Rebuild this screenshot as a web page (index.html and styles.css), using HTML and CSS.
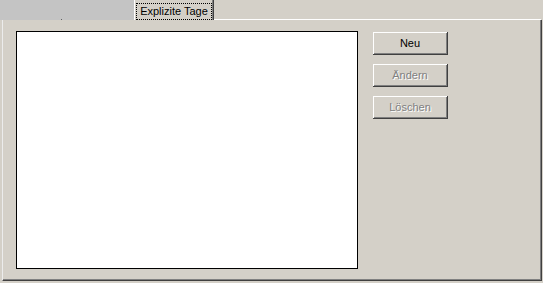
FILE: index.html
```html
<!doctype html>
<html>
<head>
<meta charset="utf-8">
<title>Explizite Tage</title>
<link rel="stylesheet" href="styles.css">
</head>
<body>
    <div class="window">
        <div class="tab-strip">
            <div class="tab-hidden"><span class="dot"></span></div>
            <div class="tab active"><span class="focus">Explizite Tage</span></div>
            <div class="tab-rest"></div>
        </div>
        <div class="panel">
            <div class="listbox"></div>
            <div class="buttons">
                <button class="btn">Neu</button>
                <button class="btn" disabled>Ändern</button>
                <button class="btn" disabled>Löschen</button>
            </div>
        </div>
    </div>
</body>
</html>
```

FILE: styles.css
```css
*{
    padding: 0px;
    margin: 0px;
    box-sizing: border-box;
}
body{
    background-color: #d4d0c8;
    font-family: "Liberation Sans", Arial, sans-serif;
    font-size: 11px;
    color: black;
}
.window{
    width: 543px;
    height: 283px;
}
.tab-strip{
    display: flex;
    height: 20px;
}
.tab-hidden{
    width: 134px;
    height: 20px;
    background-color: #c4c4c4;
    position: relative;
}
.dot{
    position: absolute;
    left: 61px;
    bottom: 0px;
    width: 1px;
    height: 1px;
    background-color: #606060;
}
.tab{
    width: 80px;
    height: 20px;
    border-left: 1px solid white;
    border-right: 1px solid #404040;
    box-shadow: inset -1px 0px 0px #808080;
    padding: 3px 0px 0px 1px;
}
.focus{
    display: block;
    width: 76px;
    height: 17px;
    border: 1px dotted black;
    text-align: center;
    line-height: 15px;
}
.tab-rest{
    flex: 1;
    border-bottom: 1px solid white;
    margin-right: 2px;
}
.panel{
    display: flex;
    align-items: flex-start;
    gap: 15px;
    width: 540px;
    height: 261px;
    margin-left: 2px;
    border-left: 1px solid #ececec;
    border-right: 1px solid #404040;
    border-bottom: 1px solid #404040;
    box-shadow: inset -1px -1px 0px #808080;
    padding: 11px 0px 0px 13px;
}
.listbox{
    width: 342px;
    height: 238px;
    background-color: white;
    border: 1px solid black;
}
.buttons{
    display: flex;
    flex-direction: column;
    gap: 9px;
    padding-top: 1px;
}
.btn{
    width: 75px;
    height: 23px;
    font-family: "Liberation Sans", Arial, sans-serif;
    font-size: 11px;
    color: black;
    background-color: #d4d0c8;
    border: none;
    border-right: 1px solid #404040;
    border-bottom: 1px solid #404040;
    box-shadow: inset 1px 1px 0px white, inset -1px -1px 0px #808080;
}
.btn:disabled{
    color: #808080;
    text-shadow: 1px 1px 0px white;
}
```
